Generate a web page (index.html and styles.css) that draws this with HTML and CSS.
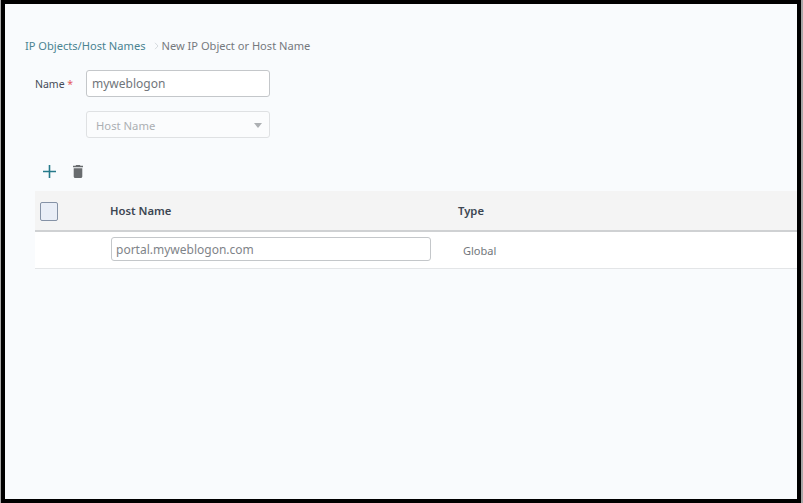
FILE: index.html
```html
<!DOCTYPE html>
<html lang="en">
<head>
<meta charset="utf-8">
<title>New IP Object or Host Name</title>
<link rel="stylesheet" href="styles.css">
</head>
<body>
<div class="frame">
  <main class="screen">
    <nav class="crumbs">
      <a class="crumb-link">IP Objects/Host Names</a>
      <svg class="crumb-sep" width="5" height="8" viewBox="0 0 5 8"><path d="M1 .8 4 4 1 7.2" fill="none" stroke="#d5dade" stroke-width="1"/></svg>
      <span class="crumb-current">New IP Object or Host Name</span>
    </nav>
    <div class="field-row">
      <label class="field-label">Name <span class="req">*</span></label>
      <div class="input name-input">myweblogon</div>
    </div>
    <div class="select">
      <span>Host Name</span>
      <svg width="8" height="5" viewBox="0 0 8 5"><path d="M0 0h8L4 5z" fill="#adb0b3"/></svg>
    </div>
    <div class="toolbar">
      <svg width="13" height="13" viewBox="0 0 13 13"><path d="M6.500 0v13M0 6.500h13" stroke="#25798a" stroke-width="1.600" fill="none"/></svg>
      <svg width="10" height="13" viewBox="0 0 10 13"><path d="M3.200 0h3.600l.7.8H10v1.500H0V.8h2.500zM.7 3.200h8.600V11.500c0 .8-.7 1.500-1.500 1.500H2.200c-.8 0-1.500-.7-1.500-1.500z" fill="#696c6f"/></svg>
    </div>
    <div class="table">
      <div class="thead">
        <div class="cell-check"><span class="checkbox"></span></div>
        <div class="th col-host">Host Name</div>
        <div class="th col-type">Type</div>
      </div>
      <div class="tr">
        <div class="cell-check"></div>
        <div class="col-host"><div class="input host-input">portal.myweblogon.com</div></div>
        <div class="col-type type-value">Global</div>
      </div>
    </div>
  </main>
</div>
</body>
</html>
```

FILE: styles.css
```css
* { box-sizing: border-box; }
html, body { margin: 0; padding: 0; }
body { font-family: "Noto Sans", sans-serif; background: #fff; }
.frame {
  width: 803px;
  height: 503px;
  background: #a8a8a8;
  padding: 0 2px 0 1px;
}
.screen {
  height: 503px;
  border: solid #000;
  border-width: 4px;
  background: #f9fbfd;
  padding: 34px 0 0 20px;
  overflow: hidden;
}
.crumbs {
  display: flex;
  align-items: center;
  height: 16px;
  font-size: 11.100px;
  line-height: 16px;
}
.crumb-link { color: #4a8391; }
.crumb-sep { margin: 0 2px 0 9px; }
.crumb-current { color: #75797d; }
.field-row {
  display: flex;
  align-items: center;
  margin: 16px 0 0 10px;
}
.field-label {
  width: 51px;
  font-size: 10.500px;
  color: #454c58;
}
.req { color: #e4585e; }
.input {
  background: #fff;
  border: 1px solid #c4c7ca;
  border-radius: 3px;
  color: #71767b;
  display: flex;
  align-items: center;
}
.name-input {
  width: 184px;
  height: 27px;
  padding-left: 5px;
  font-size: 12px;
}
.select {
  width: 184px;
  height: 27px;
  margin: 14px 0 0 61px;
  padding: 2px 7px 0 9px;
  background: #fbfcfd;
  border: 1px solid #dfe1e3;
  border-radius: 3px;
  color: #abafb3;
  font-size: 11.250px;
  display: flex;
  align-items: center;
  justify-content: space-between;
}
.toolbar {
  display: flex;
  align-items: center;
  gap: 17px;
  height: 14px;
  margin: 26px 0 0 18px;
}
.table { margin: 13px 0 0 10px; }
.thead {
  display: flex;
  align-items: center;
  height: 41px;
  background: #f4f4f4;
  border-bottom: 2px solid #cfd1d3;
}
.tr {
  display: flex;
  align-items: center;
  height: 37px;
  background: #fff;
  border-bottom: 1px solid #e3e5e7;
}
.cell-check { width: 75px; padding-left: 5px; flex: none; display: flex; }
.checkbox {
  width: 18px;
  height: 19px;
  margin-top: 1px;
  background: #e9eef7;
  border: 1px solid #8592a6;
  border-radius: 2px;
}
.col-host { width: 348px; flex: none; }
.th { font-size: 11.250px; font-weight: 600; color: #3c4652; }
.host-input {
  width: 320px;
  height: 24px;
  padding-left: 4px;
  font-size: 12px;
  color: #7f8489;
  margin: 0 0 2px 1px;
}
.type-value { font-size: 11px; color: #71767b; padding-left: 5px; }
```
